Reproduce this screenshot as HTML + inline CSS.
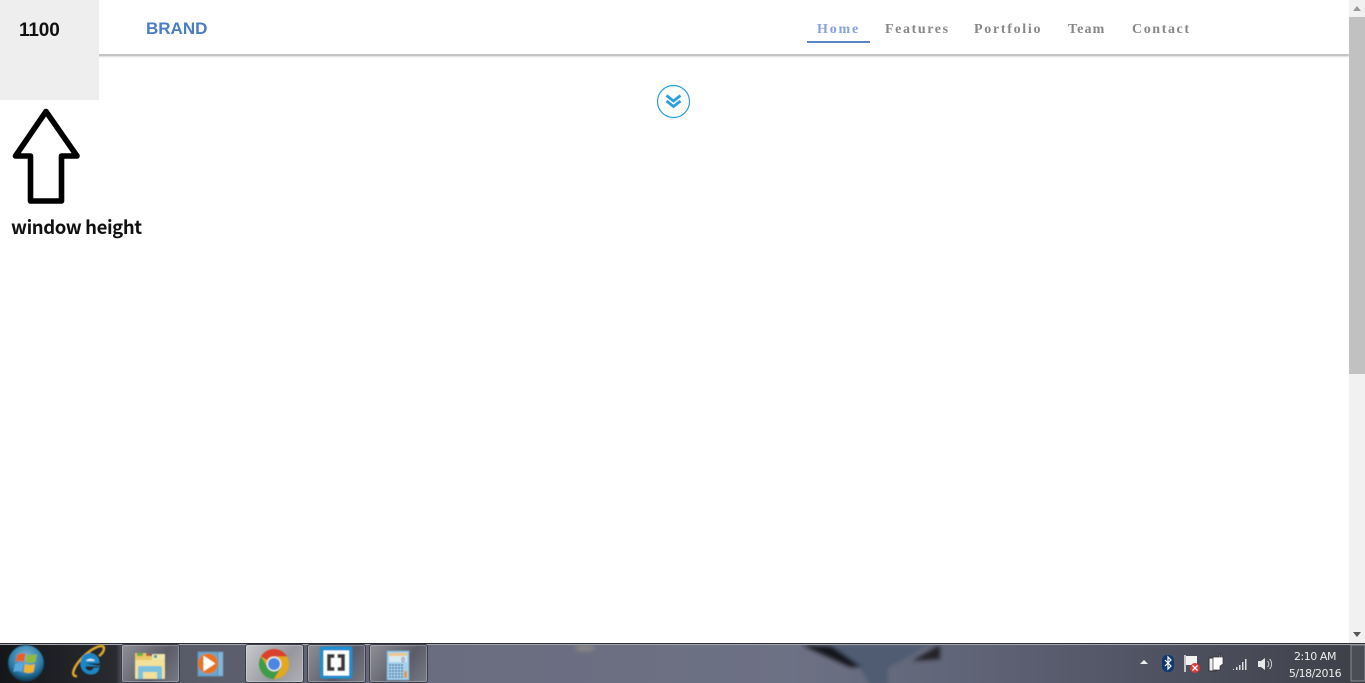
<!DOCTYPE html>
<html>
<head>
<meta charset="utf-8">
<style>
html,body{margin:0;padding:0;width:1365px;height:683px;overflow:hidden;background:#fff;font-family:"Liberation Sans",sans-serif}
.a{position:absolute}
#nav a{position:absolute;top:22px;font:bold 14px/16px "Liberation Serif",serif;letter-spacing:1.6px;color:#888;white-space:nowrap}
.btn{position:absolute;top:1px;width:57px;height:37px;border:1px solid #3a3d48;border-radius:3px;box-shadow:inset 0 0 0 1px rgba(255,255,255,.25);background:linear-gradient(125deg,#8e8f96,#5b5c68 60%,#777a85)}
</style>
</head>
<body>
<div class="a" style="left:0;top:0;width:1349px;height:54px;background:#fff;box-shadow:0 1px 2px #aaa;border-bottom:1px solid #c4c4c4"></div>
<div class="a" style="left:0;top:0;width:99px;height:100px;background:#eee"></div>
<div class="a" style="left:19px;top:19px;font:bold 19px/23px 'Liberation Sans',sans-serif;letter-spacing:-.15px;color:#111">1100</div>
<div class="a" style="left:146px;top:19px;font:bold 17px/20px 'Liberation Sans',sans-serif;color:#4a7cc9">BRAND</div>
<div id="nav">
<a style="left:817px;color:#85a3dc;letter-spacing:1.8px">Home</a>
<a style="left:885px">Features</a>
<a style="left:974px;letter-spacing:1.7px">Portfolio</a>
<a style="left:1068px;letter-spacing:1.1px">Team</a>
<a style="left:1132px">Contact</a>
</div>
<div class="a" style="left:807px;top:41px;width:63px;height:2px;background:#5a86c5"></div>
<svg class="a" style="left:656px;top:84px" width="35" height="35" viewBox="0 0 35 35">
<circle cx="17.5" cy="17.5" r="16" fill="#fff" stroke="#2a9fe0" stroke-width="1.2"/>
<path d="M10.500 11.500l7 5.500 7-5.500M10.500 17l7 5.500 7-5.500" fill="none" stroke="#2a9fe0" stroke-width="2.800"/>
</svg>
<svg class="a" style="left:10px;top:106px" width="74" height="100" viewBox="0 0 74 100">
<path d="M36 5.500L5.500 50H20.500V95H51.500V50H67Z" fill="#fff" stroke="#000" stroke-width="5.600" stroke-linejoin="round"/>
</svg>
<div class="a" style="left:11px;top:215px;font:bold 18.500px/25px 'Noto Sans CJK SC','Liberation Sans',sans-serif;letter-spacing:-.4px;color:#111;white-space:nowrap">window height</div>
<!-- scrollbar -->
<div class="a" style="left:1349px;top:0;width:16px;height:643px;background:#f1f1f1"></div>
<div class="a" style="left:1349px;top:17px;width:16px;height:357px;background:#c1c1c1"></div>
<svg class="a" style="left:1349px;top:0" width="16" height="643"><path d="M8 6l-4 5h8z" fill="#999"/><path d="M8 637l-4-5h8z" fill="#555"/></svg>
<!-- taskbar -->
<div class="a" style="left:0;top:643px;width:1365px;height:40px;overflow:hidden;background:#6a6e80">
<svg class="a" style="left:0;top:0" width="1365" height="40">
<defs>
<linearGradient id="bg" x1="0" x2="1" y1="0" y2="0">
<stop offset="0" stop-color="#15161a"/><stop offset=".085" stop-color="#2a2b30"/><stop offset=".09" stop-color="#545662"/><stop offset=".32" stop-color="#6a6d80"/><stop offset=".58" stop-color="#6d7184"/><stop offset=".7" stop-color="#606578"/><stop offset=".85" stop-color="#4f5261"/><stop offset="1" stop-color="#3e4048"/>
</linearGradient>
<radialGradient id="orb" cx=".5" cy=".35" r=".65"><stop offset="0" stop-color="#7db8d6"/><stop offset=".7" stop-color="#2a7aa6"/><stop offset="1" stop-color="#0d3a55"/></radialGradient>
<filter id="b"><feGaussianBlur stdDeviation="2"/></filter>
<filter id="s"><feGaussianBlur stdDeviation=".4"/></filter>
</defs>
<rect width="1365" height="40" fill="url(#bg)"/>
<g filter="url(#b)">
<path d="M805 2L860 25L870 42H888L888 25L915 10L925 2Z" fill="#4f5c72"/>
<path d="M802 2L832 3L862 24L850 24Z" fill="#17181c"/>
<path d="M912 18L940 2V16Z" fill="#222328"/>
<ellipse cx="585" cy="5" rx="10" ry="3" fill="#8a8986"/>
</g>
<rect width="1365" height="1" fill="#2b2d35"/>
<rect y="1" width="1365" height="1" fill="#a4a6ad"/>
</svg>
<div class="btn" style="left:121px"></div>
<div class="btn" style="left:245px;background:linear-gradient(125deg,#c8c9cd,#96979e 60%,#b0b1b6)"></div>
<div class="btn" style="left:307px"></div>
<div class="btn" style="left:369px"></div>
<svg class="a" style="left:0;top:0" width="440" height="40" viewBox="0 0 440 40">
<g filter="url(#s)">
<!-- start orb -->
<circle cx="26" cy="20" r="18" fill="url(#orb)" stroke="#143a50"/>
<path d="M17 12q5-3 8.500-1l-1.500 8q-5-2-8.500 0z" fill="#e2622c"/>
<path d="M27 11q5 2 10 0l-1.500 8q-5 2-10 0z" fill="#8ebb3a"/>
<path d="M15 21q5-2 8.500 0l-1.500 8q-5-2-8.500 0z" fill="#5aa8e0"/>
<path d="M25 21q5 2 10 0l-1.500 8q-5 2-10 0z" fill="#f1b52e"/>
<!-- IE -->
<path d="M77 33C70 34 73 24 83 14C92 5 103 0 104 5C104 8 102 11 99 13" fill="none" stroke="#e2a92c" stroke-width="2.500"/>
<path d="M83 20H99A9 9 0 0 0 81 19C80 27 86 31 91 31C95 31 98 29 99 25H94C93 27 92 28 90 28C87 28 85 26 85 23H100" fill="#1f87c7" stroke="#1f87c7" stroke-width="1"/>
<path d="M86 18a5 4 0 0 1 9 0z" fill="#d5eefa"/>
<!-- Explorer -->
<path d="M135 10h11l2 3h16v22h-29z" fill="#e9c766"/>
<rect x="137" y="10" width="6" height="3" fill="#6db04c"/>
<rect x="146" y="11" width="4" height="2" fill="#c2563a"/>
<rect x="152" y="11" width="13" height="6" fill="#f1e6a8"/>
<rect x="154" y="12" width="3" height="3" fill="#3f9fb0"/>
<rect x="135" y="17" width="30" height="19" rx="1" fill="#f3e099"/>
<path d="M138 36V25q0-2 2-2h20q2 0 2 2v11h-5v-7h-14v7z" fill="#7cc0e0"/>
<!-- Media player -->
<rect x="198" y="9" width="25" height="24" fill="#86b6d6" stroke="#5e95bb"/>
<rect x="198" y="9" width="20" height="24" fill="#6ba6cb" stroke="#5e95bb"/>
<circle cx="208" cy="20.500" r="10" fill="#e8731a"/>
<path d="M204 13.500l10.500 7-10.500 7z" fill="#fff" stroke="#fff" stroke-linejoin="round"/>
<!-- Chrome -->
<circle cx="274" cy="21" r="15" fill="#e3a81f"/>
<path d="M261 13.500A15 15 0 0 1 287 13.500H274A7.500 7.500 0 0 0 267 17z" fill="#d9402f"/>
<path d="M261 13.500A15 15 0 0 0 274 36L281 24.500L274 28.500A7.500 7.500 0 0 1 267 23z" fill="#3d9b48"/>
<circle cx="274" cy="21" r="7.500" fill="#e9e9ec"/>
<circle cx="274" cy="21" r="6" fill="#4c86e5"/>
<!-- Brackets -->
<rect x="320" y="3.500" width="32.500" height="32" rx="2" fill="#1f90d2"/>
<rect x="323.500" y="7.500" width="25.500" height="25" fill="#fff"/>
<path d="M334.500 13H329V26H334.500M337.500 13H343V26H337.500" fill="none" stroke="#3a3a3a" stroke-width="4"/>
<!-- Calc -->
<rect x="387" y="8" width="22" height="29" fill="#a9d1ea" stroke="#6fa5c8"/>
<rect x="389" y="10" width="18" height="3" fill="#eec88a"/>
<rect x="389" y="13" width="18" height="6" fill="#d9e9f2"/>
<text x="401" y="19" font-family="Liberation Mono,monospace" font-size="7" fill="#557">0</text>
<path d="M389 22h15M389 25h15M389 28h15M389 31h15M389 34h15" stroke="#3f74a3" stroke-width="1.500" stroke-dasharray="2 1"/>
<rect x="404" y="28" width="3" height="7" fill="#e29a3a"/>
</g>
</svg>
<svg class="a" style="left:1130px;top:0" width="235" height="40" viewBox="0 0 235 40">
<path d="M10 21h8l-4-4z" fill="#eee"/>
<rect x="32" y="12" width="12" height="17" rx="5.500" fill="#0d3870"/>
<path d="M35 17l6 6-3 3v-12l3 3-6 6" fill="none" stroke="#fff" stroke-width="1.200"/>
<path d="M55 12v17" stroke="#eee" stroke-width="1.500"/>
<path d="M56 13h11v9h-11z" fill="#f2f2f2"/>
<circle cx="65" cy="25" r="5" fill="#d93a3a"/>
<path d="M62.500 22.500l5 5m0-5l-5 5" stroke="#fff" stroke-width="1.300"/>
<path d="M79 15h7v13h-7z" fill="#eee" stroke="#333"/>
<path d="M83 14h6v-3h1v3h1v-3h1v3h1v7l-3 2v4h-7z" fill="#fff" stroke="#333" stroke-width=".7"/>
<path d="M103 27v-1h1v1zM106 27v-3h1.500v3zM109 27v-5h1.500v5zM112 27v-8h1.500v8zM115 27v-11h1.500v11z" fill="#ddd"/>
<path d="M128 18h3l4-3v12l-4-3h-3z" fill="#e8e8e8"/>
<path d="M137.500 18a4 4 0 0 1 0 6M139.500 16a7 7 0 0 1 0 10" fill="none" stroke="#ccc"/>
<rect x="221" y="2" width="14" height="36" fill="#4a4c56" stroke="#8b8d95"/>
</svg>
<div class="a" style="left:1276px;top:5px;width:78px;text-align:center;font:11px/17px 'DejaVu Sans',sans-serif;letter-spacing:-.45px;color:#eee">2:10 AM<br>5/18/2016</div>
</div>
</body>
</html>
